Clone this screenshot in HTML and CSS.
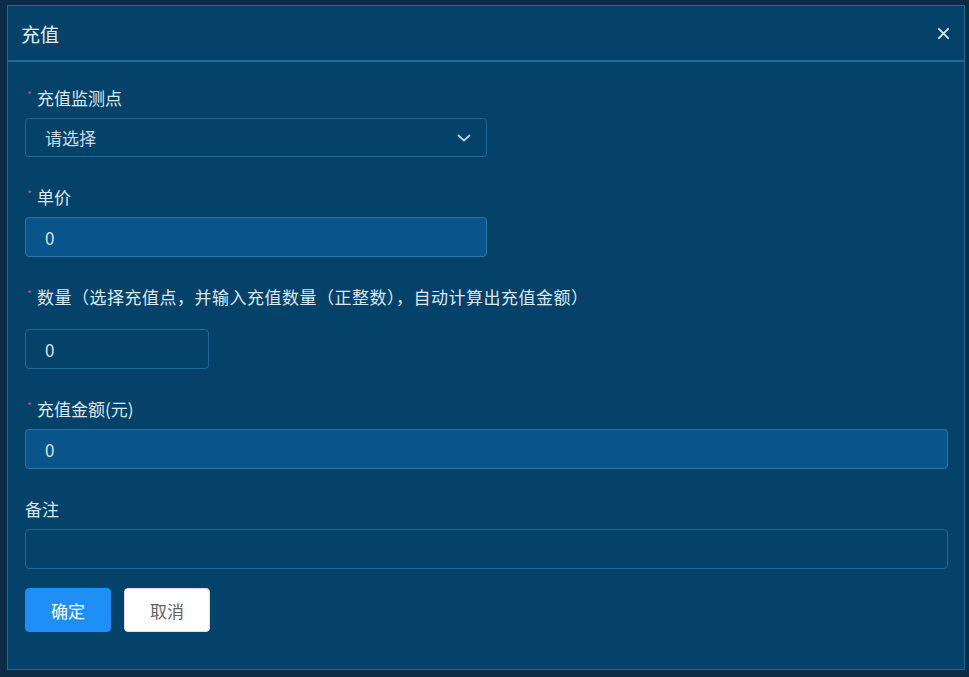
FILE: index.html
```html
<!DOCTYPE html>
<html lang="zh-CN">
<head>
<meta charset="utf-8">
<title>充值</title>
<link rel="stylesheet" href="styles.css">
</head>
<body>
<div class="page">
  <div class="dialog">
    <div class="dialog-header">
      <span class="dialog-title">充值</span>
      <svg class="close" viewBox="0 0 14 14" width="14" height="14"><path d="M2 2 L12 12 M12 2 L2 12" stroke="#d4e6f3" stroke-width="2" stroke-linecap="round"/></svg>
    </div>
    <div class="dialog-body">
      <div class="item">
        <div class="label"><span class="star">*</span>充值监测点</div>
        <div class="input select w-half">
          <span class="placeholder">请选择</span>
          <svg class="chev" viewBox="0 0 14 8" width="14" height="8"><path d="M1.5 1.5 L7 6.5 L12.5 1.5" fill="none" stroke="#b9d0e2" stroke-width="1.8" stroke-linecap="round" stroke-linejoin="round"/></svg>
        </div>
      </div>
      <div class="item">
        <div class="label"><span class="star">*</span>单价</div>
        <div class="input filled w-half">0</div>
      </div>
      <div class="item">
        <div class="label label-tall"><span class="star">*</span>数量（选择充值点，并输入充值数量（正整数），自动计算出充值金额）</div>
        <div class="input w-small">0</div>
      </div>
      <div class="item">
        <div class="label"><span class="star">*</span>充值金额(元)</div>
        <div class="input filled w-full">0</div>
      </div>
      <div class="item item-last">
        <div class="label">备注</div>
        <div class="input w-full"></div>
      </div>
      <div class="actions">
        <button class="btn btn-primary">确定</button>
        <button class="btn btn-default">取消</button>
      </div>
    </div>
  </div>
</div>
</body>
</html>
```
FILE: styles.css
```css
html, body {
  margin: 0;
  padding: 0;
  background: #0c2b45;
  font-family: "Noto Sans CJK SC", "Noto Sans", "Liberation Sans", sans-serif;
}
.page {
  width: 969px;
  height: 677px;
  padding: 5px 4px 0 7px;
  box-sizing: border-box;
}
.dialog {
  width: 958px;
  height: 665px;
  box-sizing: border-box;
  background: #05426a;
  border: 1px solid #1b6a98;
  display: flex;
  flex-direction: column;
}
.dialog-header {
  height: 56px;
  box-sizing: border-box;
  border-bottom: 2px solid #1a6a9a;
  display: flex;
  align-items: center;
  justify-content: space-between;
  padding: 0 14px 0 13px;
}
.dialog-title {
  font-size: 19px;
  color: #e3eff8;
  line-height: 1;
}
.close {
  display: block;
  width: 13px;
  height: 13px;
}
.dialog-body {
  padding: 26px 16px 0 17px;
}
.item {
  margin-bottom: 30px;
}
.item-last {
  margin-bottom: 19px;
}
.label {
  font-size: 17px;
  line-height: 20px;
  height: 20px;
  color: #dbe8f2;
  margin-bottom: 10px;
  display: flex;
  align-items: center;
  white-space: nowrap;
}
.label-tall {
  margin-bottom: 22px;
  letter-spacing: 0.5px;
}
.star {
  color: #e5484d;
  font-size: 10px;
  width: 12px;
  flex: none;
  padding-left: 2px;
  box-sizing: border-box;
  align-self: flex-start;
  line-height: 14px;
  letter-spacing: 0;
}
.input {
  height: 40px;
  box-sizing: border-box;
  border: 1px solid #1d6896;
  border-radius: 4px;
  background: #05426a;
  color: #d3e3ef;
  font-size: 17px;
  padding: 0 19px;
  display: flex;
  align-items: center;
}
.select {
  height: 39px;
  justify-content: space-between;
  padding-right: 15px;
}
.filled {
  background: #0a548c;
  border-color: #2a74a6;
}
.placeholder {
  color: #c9dae7;
  font-size: 17px;
}
.chev {
  display: block;
}
.w-half { width: 462px; }
.w-small { width: 184px; }
.w-full { width: 923px; }
.actions {
  display: flex;
  gap: 13px;
}
.btn {
  width: 86px;
  height: 44px;
  border-radius: 4px;
  font-family: inherit;
  font-size: 17px;
  cursor: pointer;
  padding: 0;
}
.btn-primary {
  background: #1e8ff7;
  border: 1px solid #1e8ff7;
  color: #ffffff;
}
.btn-default {
  background: #ffffff;
  border: 1px solid #dcdfe6;
  color: #606266;
}
```
